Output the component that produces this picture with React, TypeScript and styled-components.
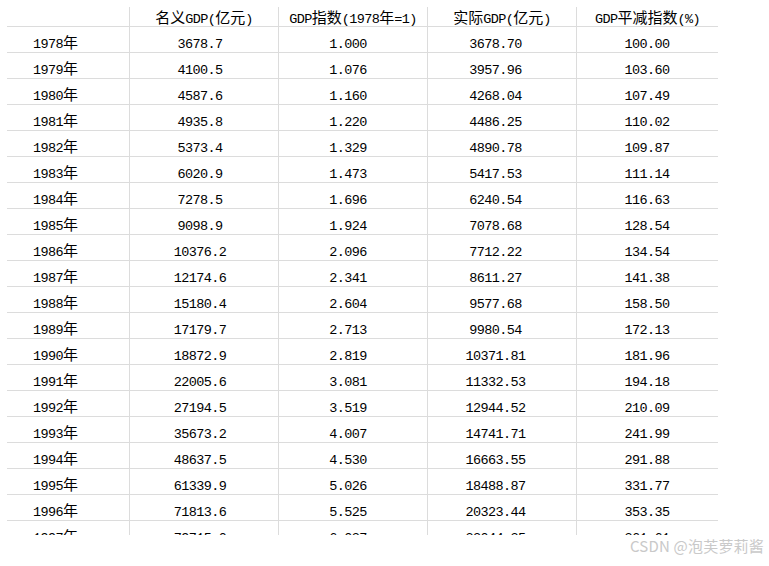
import React from "react";
import styled, { createGlobalStyle } from "styled-components";

const GlobalStyle = createGlobalStyle`
  html, body {
    margin: 0;
    padding: 0;
    background: #ffffff;
  }
`;

const LINE = "#dcdcdc";

const Page = styled.div`
  position: relative;
  width: 769px;
  height: 566px;
  box-sizing: border-box;
  padding: 7px 0 0 7px;
  overflow: hidden;
  background: #ffffff;
`;

const Sheet = styled.div`
  width: 711px;
  height: 528px;
  overflow: hidden;
  display: flex;
  flex-direction: column;
`;

const Row = styled.div<{ $header?: boolean }>`
  display: flex;
  flex: 0 0 auto;
  height: ${(p) => (p.$header ? 20 : 26)}px;
  box-sizing: border-box;
  border-bottom: 1px solid ${LINE};
`;

const Cell = styled.div<{
  $w: number;
  $last?: boolean;
  $align: "left" | "center";
  $padL?: number;
  $padR?: number;
  $header?: boolean;
}>`
  flex: 0 0 ${(p) => p.$w}px;
  box-sizing: border-box;
  border-right: ${(p) => (p.$last ? "none" : `1px solid ${LINE}`)};
  padding-top: ${(p) => (p.$header ? 5 : 10)}px;
  padding-left: ${(p) => p.$padL ?? 0}px;
  padding-right: ${(p) => p.$padR ?? 0}px;
  text-align: ${(p) => p.$align};
  white-space: nowrap;
  font-family: "Liberation Mono", "Noto Sans CJK SC", monospace;
  font-size: 13.5px;
  letter-spacing: -0.6px;
  line-height: 16px;
  color: #000000;
`;

const Han = styled.span`
  font-family: "Noto Sans CJK SC", "Noto Sans CJK JP", sans-serif;
  font-size: 15px;
  letter-spacing: 0;
  line-height: 0;
`;

const Watermark = styled.div`
  position: absolute;
  right: 5px;
  top: 537px;
  font-family: "Noto Sans CJK SC", "Noto Sans", sans-serif;
  font-size: 15px;
  line-height: 18px;
  color: #c9c9c9;
  letter-spacing: 0.2px;
  white-space: nowrap;
`;

const CJK = /[\u3000-\u9fff\uff00-\uffef]/;

function Txt({ s }: { s: string }) {
  const parts = s.split(/([\u3000-\u9fff\uff00-\uffef]+)/).filter((p) => p !== "");
  return (
    <>
      {parts.map((p, i) => (CJK.test(p) ? <Han key={i}>{p}</Han> : <React.Fragment key={i}>{p}</React.Fragment>))}
    </>
  );
}

const WIDTHS = [123, 149, 149, 149, 141];
const NUM_PAD_R = [0, 8, 10, 13, 1];

const HEADERS = ["", "名义GDP(亿元)", "GDP指数(1978年=1)", "实际GDP(亿元)", "GDP平减指数(%)"];

const DATA: string[][] = [
  ["1978年", "3678.7", "1.000", "3678.70", "100.00"],
  ["1979年", "4100.5", "1.076", "3957.96", "103.60"],
  ["1980年", "4587.6", "1.160", "4268.04", "107.49"],
  ["1981年", "4935.8", "1.220", "4486.25", "110.02"],
  ["1982年", "5373.4", "1.329", "4890.78", "109.87"],
  ["1983年", "6020.9", "1.473", "5417.53", "111.14"],
  ["1984年", "7278.5", "1.696", "6240.54", "116.63"],
  ["1985年", "9098.9", "1.924", "7078.68", "128.54"],
  ["1986年", "10376.2", "2.096", "7712.22", "134.54"],
  ["1987年", "12174.6", "2.341", "8611.27", "141.38"],
  ["1988年", "15180.4", "2.604", "9577.68", "158.50"],
  ["1989年", "17179.7", "2.713", "9980.54", "172.13"],
  ["1990年", "18872.9", "2.819", "10371.81", "181.96"],
  ["1991年", "22005.6", "3.081", "11332.53", "194.18"],
  ["1992年", "27194.5", "3.519", "12944.52", "210.09"],
  ["1993年", "35673.2", "4.007", "14741.71", "241.99"],
  ["1994年", "48637.5", "4.530", "16663.55", "291.88"],
  ["1995年", "61339.9", "5.026", "18488.87", "331.77"],
  ["1996年", "71813.6", "5.525", "20323.44", "353.35"],
  ["1997年", "79715.0", "6.037", "22044.35", "361.61"],
];

export default function App() {
  return (
    <>
      <GlobalStyle />
      <Page>
        <Sheet>
          <Row $header>
            {HEADERS.map((h, i) => (
              <Cell key={i} $header $w={WIDTHS[i]} $last={i === 4} $align="center">
                <Txt s={h} />
              </Cell>
            ))}
          </Row>
          {DATA.map((r, ri) => (
            <Row key={ri}>
              {r.map((v, i) =>
                i === 0 ? (
                  <Cell key={i} $w={WIDTHS[i]} $align="left" $padL={26}>
                    <Txt s={v} />
                  </Cell>
                ) : (
                  <Cell key={i} $w={WIDTHS[i]} $last={i === 4} $align="center" $padR={NUM_PAD_R[i]}>
                    {v}
                  </Cell>
                )
              )}
            </Row>
          ))}
        </Sheet>
        <Watermark>CSDN @泡芙萝莉酱</Watermark>
      </Page>
    </>
  );
}
